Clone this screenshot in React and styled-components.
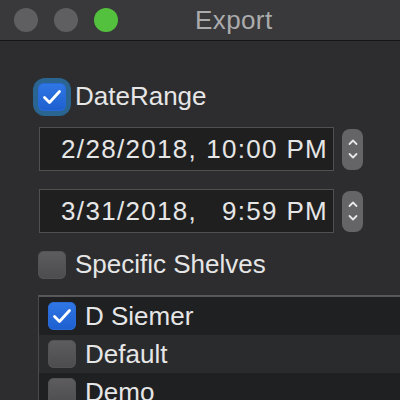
import styled, { createGlobalStyle } from "styled-components";

const GlobalStyle = createGlobalStyle`
  html, body {
    margin: 0;
    padding: 0;
    background: #2d2d2f;
  }
  * { box-sizing: border-box; }
`;

const shelves = [
  { name: "D Siemer", checked: true },
  { name: "Default", checked: false },
  { name: "Demo", checked: false },
];

function Check({ checked }) {
  return (
    <Box $checked={checked}>
      {checked && (
        <svg width="20" height="16" viewBox="0 0 20 16">
          <path d="M2.5 8.5 L7.5 13.5 L17.5 2.5" fill="none" stroke="#fff" strokeWidth="2.8" strokeLinecap="round" strokeLinejoin="round" />
        </svg>
      )}
    </Box>
  );
}

function Stepper() {
  return (
    <StepBtn>
      <svg width="12" height="28" viewBox="0 0 12 28">
        <path d="M2.5 9 L6 5.5 L9.5 9" fill="none" stroke="#e6e6e6" strokeWidth="1.8" strokeLinecap="round" strokeLinejoin="round" />
        <path d="M2.5 19 L6 22.5 L9.5 19" fill="none" stroke="#e6e6e6" strokeWidth="1.8" strokeLinecap="round" strokeLinejoin="round" />
      </svg>
    </StepBtn>
  );
}

export default function App() {
  return (
    <Window>
      <GlobalStyle />
      <TitleBar>
        <Light />
        <Light />
        <Light $color="#53c13d" />
        <Title>Export</Title>
      </TitleBar>
      <Content>
        <CheckRow>
          <Focus>
            <Check checked />
          </Focus>
          <Label>DateRange</Label>
        </CheckRow>
        <DateRow $top={16}>
          <DateField>
            <span>2/28/2018,</span>
            <Time>10:00 PM</Time>
          </DateField>
          <Stepper />
        </DateRow>
        <DateRow $top={18}>
          <DateField>
            <span>3/31/2018,</span>
            <Time>9:59 PM</Time>
          </DateField>
          <Stepper />
        </DateRow>
        <CheckRow $top={17}>
          <Check />
          <Label>Specific Shelves</Label>
        </CheckRow>
        <List>
          {shelves.map((s, i) => (
            <ListRow key={s.name} $odd={i % 2 === 1}>
              <Check checked={s.checked} />
              <Label>{s.name}</Label>
            </ListRow>
          ))}
        </List>
      </Content>
    </Window>
  );
}

const Window = styled.div`
  width: 400px;
  height: 400px;
  overflow: hidden;
  background: #2d2d2f;
  font-family: "Liberation Sans", Arial, sans-serif;
  color: #e4e4e4;
`;

const TitleBar = styled.div`
  height: 41px;
  display: flex;
  align-items: center;
  gap: 16px;
  padding-left: 14px;
  background: #39393b;
  border-bottom: 1px solid #151517;
`;

const Light = styled.div`
  width: 24px;
  height: 24px;
  border-radius: 50%;
  background: ${({ $color }) => $color || "#5f5f61"};
`;

const Title = styled.div`
  margin-left: 61px;
  font-size: 26px;
  color: #ababad;
  letter-spacing: 0.4px;
`;

const Content = styled.div`
  padding: 41px 0 0 38px;
  display: flex;
  flex-direction: column;
`;

const CheckRow = styled.div`
  display: flex;
  align-items: center;
  gap: 9px;
  margin-top: ${({ $top }) => $top || 0}px;
`;

const Focus = styled.div`
  border-radius: 7px;
  box-shadow: 0 0 0 5px #2a6591;
  display: flex;
`;

const Box = styled.div`
  width: 28px;
  height: 28px;
  border-radius: 6px;
  display: flex;
  align-items: center;
  justify-content: center;
  flex-shrink: 0;
  background: ${({ $checked }) =>
    $checked
      ? "linear-gradient(#3177e6, #1d5fce)"
      : "linear-gradient(#5d5d5f, #4c4c4e)"};
  box-shadow: inset 0 0 0 1px ${({ $checked }) => ($checked ? "#2a6ad6" : "#535355")};
`;

const Label = styled.span`
  font-size: 26px;
  line-height: 29px;
  color: #e6e6e6;
  white-space: nowrap;
`;

const DateRow = styled.div`
  display: flex;
  align-items: center;
  gap: 8px;
  margin-top: ${({ $top }) => $top}px;
  margin-left: 1px;
`;

const DateField = styled.div`
  width: 295px;
  height: 44px;
  display: flex;
  align-items: center;
  justify-content: flex-end;
  padding-right: 5px;
  background: #1f1f20;
  border: 1px solid #505052;
  font-size: 26px;
  letter-spacing: 1.3px;
  color: #e6e6e6;
  white-space: nowrap;
`;

const Time = styled.span`
  display: inline-block;
  min-width: 131px;
  text-align: right;
`;

const StepBtn = styled.div`
  width: 21px;
  height: 41px;
  border-radius: 8px;
  background: #656567;
  display: flex;
  align-items: center;
  justify-content: center;
`;

const List = styled.div`
  margin-top: 16px;
  width: 400px;
  border-top: 2px solid #58585a;
  border-left: 1px solid #4a4a4c;
  display: flex;
  flex-direction: column;
`;

const ListRow = styled.div`
  height: 38px;
  display: flex;
  align-items: center;
  gap: 9px;
  padding-left: 9px;
  background: ${({ $odd }) => ($odd ? "#2a2b2d" : "#1f2022")};
`;
